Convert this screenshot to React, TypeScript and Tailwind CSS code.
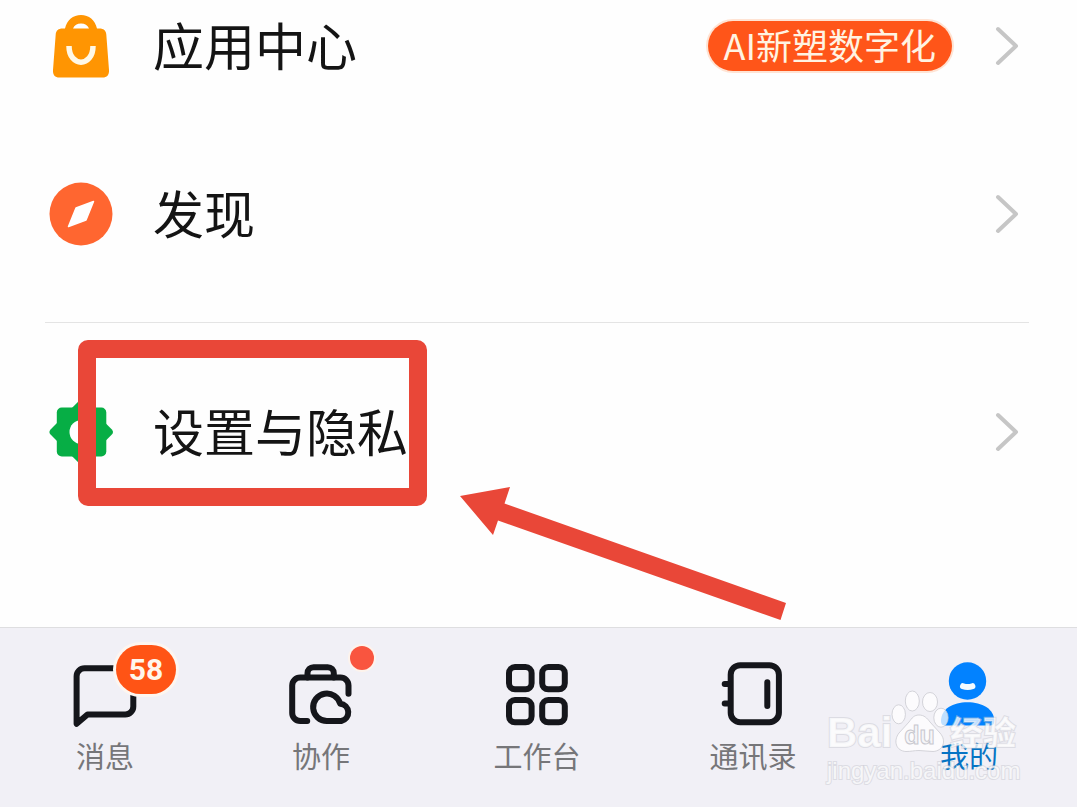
import type { ReactNode } from "react";

function BagIcon() {
  return (
    <svg viewBox="0 0 72 72" className="size-[72px] shrink-0" aria-hidden="true">
      <path d="M29 20a13 13 0 0 1 14 0z" fill="#fffdf2" />
      <path
        d="M20 18.500C22 10 28 5 36 5s14 5 16 13.500h2.500c4 0 6.500 2 6.800 6L64 60c.3 5-2 7.500-6.500 7.500h-43C10 67.500 7.700 65 8 60l2.700-35.500c.3-4 2.800-6 6.800-6zM28 18.500h16C42.500 15.300 40 13.500 36 13.500s-6.500 1.800-8 5z"
        fill="#ff9502"
        fillRule="evenodd"
      />
      <path d="M24 36c0 21.500 24 21.500 24 0" fill="none" stroke="#fff8e6" strokeWidth="5.500" />
    </svg>
  );
}

function CompassIcon() {
  return (
    <svg viewBox="0 0 72 72" className="size-[72px] shrink-0" aria-hidden="true">
      <circle cx="36" cy="36" r="31.500" fill="#ff6630" />
      <path
        d="M48.500 23.500 41 42 23.500 48.500 31 30z"
        fill="#fff"
        stroke="#fff"
        strokeWidth="1.500"
        strokeLinejoin="round"
      />
    </svg>
  );
}

function GearIcon() {
  return (
    <svg viewBox="0 0 72 72" className="size-[72px] shrink-0" aria-hidden="true">
      <g fill="#07ae45">
        <rect x="11.800" y="11.500" width="49.500" height="49" rx="5" />
        <rect x="12.700" y="12.500" width="47" height="47" rx="4" transform="rotate(45 36.200 36)" />
      </g>
      <circle cx="36.500" cy="36" r="12" fill="#fff" />
    </svg>
  );
}

function Chevron() {
  return (
    <svg viewBox="0 0 25 42" className="h-[42px] w-[25px] shrink-0" aria-hidden="true">
      <path
        d="m4 4 18 17L4 38"
        fill="none"
        stroke="#c6c6c6"
        strokeWidth="4"
        strokeLinecap="round"
        strokeLinejoin="round"
      />
    </svg>
  );
}

function NavIcon({ children }: { children: ReactNode }) {
  return (
    <svg
      viewBox="0 0 64 66"
      className="h-[66px] w-16"
      fill="none"
      stroke="#15161b"
      strokeWidth="6"
      strokeLinecap="round"
      strokeLinejoin="round"
      aria-hidden="true"
    >
      {children}
    </svg>
  );
}

function MenuRow({
  icon,
  label,
  tag,
  height,
  children,
}: {
  icon: ReactNode;
  label: string;
  tag?: string;
  height: string;
  children?: ReactNode;
}) {
  return (
    <div className={`relative ${height}`}>
      <button type="button" className="flex h-full w-full items-center pr-[10px] text-left">
        {icon}
        <span className="ml-9 flex-1 pb-1 text-[51px] leading-[60px] text-[#141414]">{label}</span>
        {tag && (
          <span className="mr-[42px] rounded-full bg-[#ff5519] px-4 pb-1 text-[36px] leading-[46px] text-[#fff3e2] ring-2 ring-[#ffe3d3]">
            {tag}
          </span>
        )}
        <Chevron />
      </button>
      {children}
    </div>
  );
}

function NavItem({
  label,
  icon,
  badge,
  active = false,
}: {
  label: string;
  icon: ReactNode;
  badge?: ReactNode;
  active?: boolean;
}) {
  return (
    <a
      href="#"
      aria-current={active ? "page" : undefined}
      className="flex flex-col items-center pt-[34px]"
    >
      <span className="relative">
        <NavIcon>{icon}</NavIcon>
        {badge}
      </span>
      <span
        className={`mt-1.5 text-[29px] leading-[42px] ${active ? "text-[#0674c4]" : "text-[#767679]"}`}
      >
        {label}
      </span>
    </a>
  );
}

const outlined =
  "text-white/75 [paint-order:stroke_fill] [-webkit-text-stroke:2px_rgba(200,200,208,0.5)]";

function Watermark() {
  return (
    <div className="pointer-events-none absolute right-[58px] bottom-[22px] w-[192px] font-['Liberation_Sans','Noto_Sans_CJK_SC',sans-serif]">
      <div className="flex h-[64px] items-end">
        <span className={`w-[62px] text-[42px] leading-[40px] font-bold ${outlined}`}>Bai</span>
        <span className="relative flex h-[64px] w-[61px] shrink-0 items-end justify-center">
          <svg viewBox="0 0 61 64" className="absolute inset-0 h-full w-full" aria-hidden="true">
            <g fill="#fff" fillOpacity="0.75" stroke="#c4c4cc" strokeOpacity="0.7">
              <ellipse cx="9.700" cy="25.300" rx="6.700" ry="9.500" />
              <ellipse cx="23.300" cy="12" rx="7" ry="10" />
              <ellipse cx="41" cy="13" rx="7.500" ry="9.500" />
              <ellipse cx="52" cy="28.700" rx="7.200" ry="9.500" />
              <path d="M30 26c5 0 8 3 11 7l10 11c7 8 3 18-7 18.500-5 0-9-1-14-1s-8 1-13 1C7 62 4 52 10 44l10-11c3-4 5-7 10-7z" />
            </g>
          </svg>
          <span className="relative mb-[5px] text-[25px] leading-[26px] font-bold text-[#f5f5f8] [-webkit-text-stroke:1px_#c8c8cf]">
            du
          </span>
        </span>
        <span className={`text-[33px] leading-[38px] font-bold whitespace-nowrap ${outlined}`}>
          经验
        </span>
      </div>
      <div className={`mt-1 text-[24px] leading-[28px] whitespace-nowrap ${outlined}`}>
        jingyan.baidu.com
      </div>
    </div>
  );
}

export default function App() {
  return (
    <div className="flex min-h-screen flex-col overflow-hidden bg-[#fefefe] font-['Noto_Sans_CJK_SC',sans-serif]">
      <main className="relative flex-1 pr-[48px] pl-[45px]">
        <MenuRow icon={<BagIcon />} label="应用中心" tag="AI新塑数字化" height="h-[92px]" />
        <div className="mt-[38px] border-b border-[#e4e4e4] pb-6">
          <MenuRow icon={<CompassIcon />} label="发现" height="h-[168px]" />
        </div>
        <MenuRow icon={<GearIcon />} label="设置与隐私" height="h-[218px]">
          <div className="pointer-events-none absolute top-[17px] left-[33px] h-[166px] w-[349px] rounded-[10px] border-[18px] border-[#e94738]" />
        </MenuRow>
        <svg
          viewBox="0 0 328 134"
          className="pointer-events-none absolute top-[487px] left-[459px] h-[134px] w-[328px]"
          aria-hidden="true"
        >
          <path d="M1 9 51 0l-5.500 16.500L327 116l-5.500 17L39 33.500 34 48z" fill="#e94738" />
        </svg>
      </main>

      <nav className="relative h-[180px] border-t border-[#dedee0] bg-[#f1f0f6]">
        <div className="-ml-[3px] grid grid-cols-5">
          <NavItem
            label="消息"
            icon={
              <path d="M3.600 61.800V14.300a8 8 0 0 1 8-8H52.300a8 8 0 0 1 8 8V44.400a8 8 0 0 1-8 8H14.500z" />
            }
            badge={
              <span className="absolute -top-[17px] left-[43px] flex h-[49px] w-[60px] items-center justify-center rounded-full bg-[#ff5415] font-[Roboto,sans-serif] text-[30px] font-bold text-[#fff6ec] ring-3 ring-[#fdf6f0]">
                58
              </span>
            }
          />
          <NavItem
            label="协作"
            icon={
              <>
                <path d="M18.200 59H11.200a8 8 0 0 1-8-8V23.600a8 8 0 0 1 8-8H51.500a8 8 0 0 1 8 8V31.800" />
                <path d="M18.500 15.600V11.200a6 6 0 0 1 6-6H38.800a6 6 0 0 1 6 6V15.600" />
                <path d="M38 59A13.750 13.750 0 1 1 51.200 41.800 8.700 8.700 0 0 1 52.300 59z" />
              </>
            }
            badge={
              <span className="absolute -top-4 left-[61px] size-6 rounded-full bg-[#f9553f] ring-2 ring-[#fdf3ec]" />
            }
          />
          <NavItem
            label="工作台"
            icon={
              <>
                <rect x="4" y="5" width="22.600" height="22.300" rx="6" />
                <rect x="37.200" y="5" width="22.600" height="22.300" rx="6" />
                <rect x="4" y="38" width="22.600" height="22.300" rx="6" />
                <rect x="37.200" y="38" width="22.600" height="22.300" rx="6" />
              </>
            }
          />
          <NavItem
            label="通讯录"
            icon={
              <>
                <rect x="9.700" y="3.200" width="48.200" height="57" rx="9.500" />
                <path d="M46.300 20.300V44M3.700 22h5M3.700 41.500h5" />
              </>
            }
          />
          <NavItem
            label="我的"
            active
            icon={
              <g stroke="none">
                <circle cx="30.500" cy="19" r="18.700" fill="#0282ff" />
                <path d="M4 59c0-12 12-18.700 26.500-18.700S57.300 47 57.300 59c0 3-1.500 4.500-4 4.500H8c-2.500 0-4-1.500-4-4.500z" fill="#0282ff" />
                <path d="M26 24.200q4.700 1.800 9.400 0" stroke="#f4fbff" strokeWidth="6" />
              </g>
            }
          />
        </div>
        <Watermark />
      </nav>
    </div>
  );
}
